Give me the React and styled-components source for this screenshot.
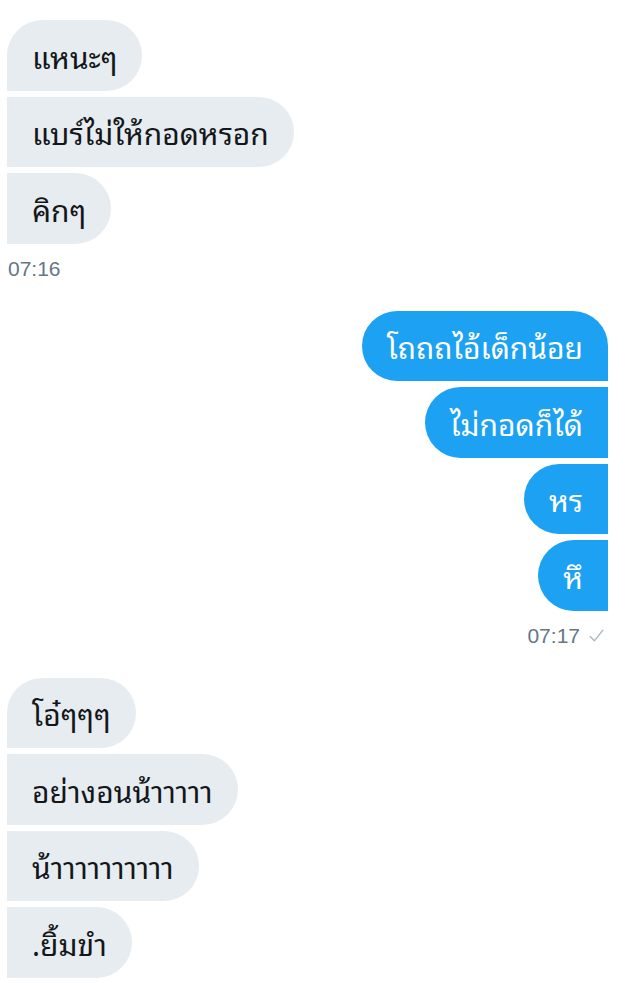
import React from 'react'
import styled, { createGlobalStyle } from 'styled-components'

const GlobalStyle = createGlobalStyle`
  html, body {
    margin: 0;
    padding: 0;
    background: #fff;
  }
  body {
    font-family: "Noto Sans Thai Looped", "Noto Sans Thai", "Noto Sans", "Liberation Sans", sans-serif;
    -webkit-font-smoothing: antialiased;
  }
`

const Thread = styled.div`
  width: 640px;
  box-sizing: border-box;
  padding: 20px 32px 0 7px;
  display: flex;
  flex-direction: column;
`

const Group = styled.div`
  display: flex;
  flex-direction: column;
  align-items: ${p => (p.mine ? 'flex-end' : 'flex-start')};
  gap: 6px;
  margin-bottom: 30px;
`

const Bubble = styled.div`
  box-sizing: border-box;
  height: 70.5px;
  padding: 0 25px;
  display: flex;
  align-items: center;
  font-size: 30px;
  white-space: nowrap;
  color: ${p => (p.mine ? '#fff' : '#14171a')};
  background: ${p => (p.mine ? '#1da1f2' : '#e6ecf0')};
  border-radius: ${p =>
    p.mine
      ? `36px ${p.first ? 36 : 0}px 0 36px`
      : `${p.first ? 36 : 0}px 36px 36px 0`};
`

const Meta = styled.div`
  margin-top: 7px;
  display: flex;
  align-items: center;
  gap: 8px;
  font-family: "Liberation Sans", "Noto Sans", sans-serif;
  font-size: 21px;
  line-height: 24px;
  color: #657786;
  padding-left: ${p => (p.mine ? 0 : 1)}px;
  padding-right: ${p => (p.mine ? 3 : 0)}px;
`

const Check = () => (
  <svg width="17" height="17" viewBox="0 0 16 16" fill="none">
    <path d="M2 9 L6 13 L14 3" stroke="#aab8c2" strokeWidth="1.3" strokeLinecap="round" strokeLinejoin="round" />
  </svg>
)

const aa = n => 'า'.repeat(n)

const groups = [
  { mine: false, time: '07:16', msgs: ['แหนะๆ', 'แบร์ไม่ให้กอดหรอก', 'คิกๆ'] },
  { mine: true, time: '07:17', msgs: ['โถถถไอ้เด็กน้อย', 'ไม่กอดก็ได้', 'หร', 'หึ'] },
  { mine: false, msgs: ['โอ๋ๆๆๆ', 'อย่างอนน้' + aa(5), 'น้' + aa(10), '.ยิ้มขำ'] },
]

export default function App() {
  return (
    <>
      <GlobalStyle />
      <Thread>
        {groups.map((g, i) => (
          <Group key={i} mine={g.mine}>
            {g.msgs.map((m, j) => (
              <Bubble key={j} mine={g.mine} first={j === 0}>
                {m}
              </Bubble>
            ))}
            {g.time && (
              <Meta mine={g.mine}>
                {g.time}
                {g.mine && <Check />}
              </Meta>
            )}
          </Group>
        ))}
      </Thread>
    </>
  )
}
